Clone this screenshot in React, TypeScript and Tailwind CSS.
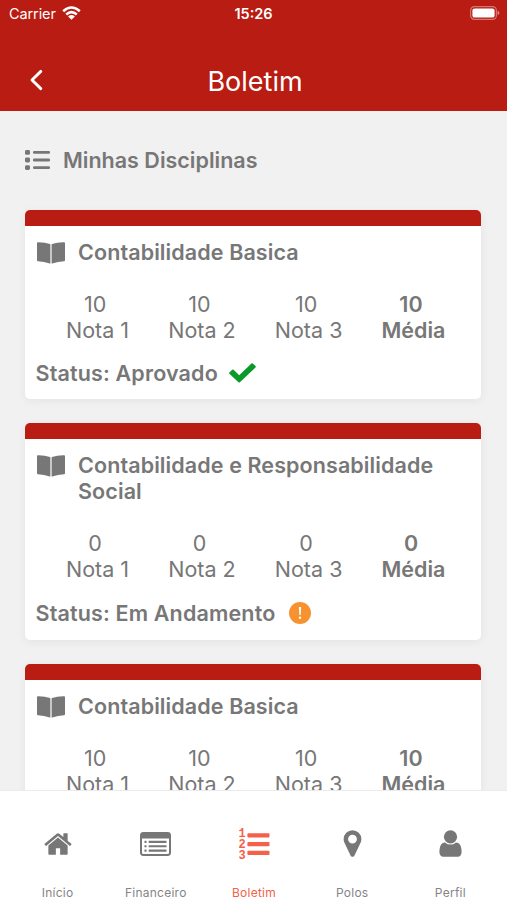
import clsx from 'clsx';
import type { ReactNode } from 'react';

type Status = 'Aprovado' | 'Em Andamento';

interface Subject {
    id: number;
    name: string;
    grades: number[];
    average: number;
    status: Status;
}

const subjects: Subject[] = [
    { id: 1, name: 'Contabilidade Basica', grades: [10, 10, 10], average: 10, status: 'Aprovado' },
    { id: 2, name: 'Contabilidade e Responsabilidade Social', grades: [0, 0, 0], average: 0, status: 'Em Andamento' },
    { id: 3, name: 'Contabilidade Basica', grades: [10, 10, 10], average: 10, status: 'Aprovado' },
];

const WifiIcon = () => (
    <svg viewBox="0 0 19 14" className="w-[19px] h-[14px] -mt-0.5" fill="none" stroke="currentColor" strokeWidth="2.6">
        <path d="M1.2 5.2Q9.5 -2.2 17.8 5.2" />
        <path d="M4.2 8.4Q9.5 3.8 14.8 8.4" />
        <path d="M9.5 13.8L6.1 10.5Q9.5 7.7 12.9 10.5Z" fill="currentColor" stroke="none" />
    </svg>
);

const BatteryIcon = () => (
    <svg viewBox="0 0 30 14" className="w-[30px] h-[14px] -mt-0.5">
        <rect x="0.6" y="0.6" width="25.8" height="12.8" rx="3.8" fill="none" stroke="#fff" strokeOpacity="0.4" strokeWidth="1.2" />
        <rect x="2.4" y="2.4" width="22.2" height="9.2" rx="2.2" fill="#fff" />
        <path d="M27.6 4.8Q29.4 5.4 29.4 7T27.6 9.2Z" fill="#fff" fillOpacity="0.5" />
    </svg>
);

const ListIcon = () => (
    <svg viewBox="0 0 25 20" className="w-[25px] h-5" fill="currentColor">
        <rect x="0" y="0" width="5" height="4.8" rx="1.4" />
        <rect x="0" y="7.6" width="5" height="4.8" rx="1.4" />
        <rect x="0" y="15.2" width="5" height="4.8" rx="1.4" />
        <rect x="8" y="1" width="17" height="2.8" rx="1.2" />
        <rect x="8" y="8.6" width="17" height="2.8" rx="1.2" />
        <rect x="8" y="16.2" width="17" height="2.8" rx="1.2" />
    </svg>
);

const BookIcon = () => (
    <svg viewBox="0 0 28 22" className="w-7 h-[22px]" fill="currentColor">
        <path d="M0 1.2Q0 .2 1 .3Q8 .2 13 2.1Q13.4 2.3 13.4 2.9V21.2Q13.4 21.7 12.8 21.5Q7 19.4 1 19.2Q0 19.1 0 18.2Z" />
        <path d="M28 1.2Q28 .2 27 .3Q20 .2 15 2.1Q14.6 2.3 14.6 2.9V21.2Q14.6 21.7 15.2 21.5Q21 19.4 27 19.2Q28 19.1 28 18.2Z" />
    </svg>
);

const CheckIcon = () => (
    <svg viewBox="0 0 27 20" className="w-[27px] h-5" fill="#0a9a2a">
        <path d="M.4 9.4L3.2 6.8Q3.9 6.2 4.6 6.8L10.2 12.2L22.4 .5Q23.1 -.1 23.8 .5L26.5 3Q27.2 3.7 26.5 4.4L10.9 19.2Q10.2 19.8 9.5 19.2L.4 10.7Q-.2 10 .4 9.4Z" />
    </svg>
);

const AlertIcon = () => (
    <svg viewBox="0 0 22 22" className="w-[22px] h-[22px]">
        <circle cx="11" cy="11" r="11" fill="#f6922f" />
        <path d="M9.9 5H12.1L11.7 13H10.3Z" fill="#fff" />
        <circle cx="11" cy="15.7" r="1.2" fill="#fff" />
    </svg>
);

const HomeIcon = () => (
    <svg viewBox="0 0 1792 1792" className="w-[30px] h-[30px]" fill="currentColor">
        <path d="M1472 992v480q0 26-19 45t-45 19h-384v-384h-256v384h-384q-26 0-45-19t-19-45v-480q0-1 .5-3t.5-3l575-474 575 474q1 2 1 6zm223-69l-62 74q-8 9-21 11h-3q-13 0-21-7l-692-577-692 577q-12 8-24 7-13-2-21-11l-62-74q-8-10-7-23.5t11-21.5l719-599q32-26 76-26t76 26l244 204v-195q0-14 9-23t23-9h192q14 0 23 9t9 23v408l219 182q10 8 11 21.5t-7 23.5z" />
    </svg>
);

const BillIcon = () => (
    <svg viewBox="0 0 31 24" className="w-[31px] h-6" fill="currentColor">
        <path fillRule="evenodd" d="M3.4 0H27.6Q31 0 31 3.4V20.6Q31 24 27.6 24H3.4Q0 24 0 20.6V3.4Q0 0 3.4 0ZM2 6.4V20.8Q2 22 3.2 22H27.8Q29 22 29 20.8V6.4Z" />
        <rect x="4.4" y="8.8" width="2.2" height="2.1" rx=".6" />
        <rect x="4.4" y="13.2" width="2.2" height="2.1" rx=".6" />
        <rect x="4.4" y="17.6" width="2.2" height="2.1" rx=".6" />
        <rect x="8.6" y="8.8" width="18" height="2.1" rx=".6" />
        <rect x="8.6" y="13.2" width="18" height="2.1" rx=".6" />
        <rect x="8.6" y="17.6" width="18" height="2.1" rx=".6" />
    </svg>
);

const NumberedListIcon = () => (
    <svg viewBox="0 0 32 32" className="w-8 h-8 overflow-visible" fill="currentColor">
        <g fontFamily="Liberation Mono, monospace" fontWeight="700" fontSize="12">
            <text x="0.6" y="9.2">1</text>
            <text x="0.6" y="20.2">2</text>
            <text x="0.6" y="31.2">3</text>
        </g>
        <rect x="9.4" y="5.2" width="22.1" height="4.2" rx=".8" />
        <rect x="9.4" y="14" width="22.1" height="4.2" rx=".8" />
        <rect x="9.4" y="22.8" width="22.1" height="4.2" rx=".8" />
    </svg>
);

const PinIcon = () => (
    <svg viewBox="0 0 1792 1792" className="w-[31px] h-[31px]" fill="currentColor">
        <path d="M1152 640q0-106-75-181t-181-75-181 75-75 181 75 181 181 75 181-75 75-181zm256 0q0 109-33 179l-364 774q-16 33-47.5 52t-67.5 19-67.5-19-46.5-52l-365-774q-33-70-33-179 0-212 150-362t362-150 362 150 150 362z" />
    </svg>
);

const UserIcon = () => (
    <svg viewBox="0 0 1792 1792" className="w-[31px] h-[31px]" fill="currentColor">
        <path d="M1536 1399q0 109-62.5 187t-150.5 78h-854q-88 0-150.5-78t-62.5-187q0-85 8.5-160.5t31.5-152 58.5-131 94-89 134.5-34.5q131 128 313 128t313-128q76 0 134.5 34.5t94 89 58.5 131 31.5 152 8.5 160.5zm-256-887q0 159-112.5 271.5t-271.5 112.5-271.5-112.5-112.5-271.5 112.5-271.5 271.5-112.5 271.5 112.5 112.5 271.5z" />
    </svg>
);

const tabs: { label: string; icon: ReactNode; active?: boolean }[] = [
    { label: 'Início', icon: <HomeIcon /> },
    { label: 'Financeiro', icon: <BillIcon /> },
    { label: 'Boletim', icon: <NumberedListIcon />, active: true },
    { label: 'Polos', icon: <PinIcon /> },
    { label: 'Perfil', icon: <UserIcon /> },
];

const Grade = ({ value, label, bold }: { value: number; label: string; bold?: boolean }) => (
    <div className={clsx('flex flex-col items-center whitespace-nowrap', bold ? 'font-semibold' : 'font-[370]')}>
        <span className="pr-[5px]">{value}</span>
        <span>{label}</span>
    </div>
);

const SubjectCard = ({ subject }: { subject: Subject }) => (
    <article className="shrink-0 rounded-[5px] bg-white overflow-hidden shadow-[0_2px_10px_rgba(0,0,0,0.06)] text-[21.5px] leading-[26px]">
        <div className="h-4 bg-[#b81c13]" />
        <div className="pt-[13px] pl-3 pr-8 flex gap-[13px] font-semibold">
            <div className="shrink-0 pt-[3px]"><BookIcon /></div>
            <h2 className="tracking-[0.1px]">{subject.name}</h2>
        </div>
        <div className="mt-[25.4px] ml-[41px] mr-[35.5px] flex justify-between">
            {subject.grades.map((grade, i) => (
                <Grade key={i} value={grade} label={`Nota ${i + 1}`} />
            ))}
            <Grade value={subject.average} label="Média" bold />
        </div>
        <div className="mt-[17.3px] pb-[12.8px] pl-[10.5px] flex items-center font-semibold">
            <span className="tracking-[0.15px]">Status: {subject.status}</span>
            {subject.status === 'Aprovado' ? (
                <div className="pl-[11px]"><CheckIcon /></div>
            ) : (
                <div className="h-7 pl-[13.5px] flex items-center"><AlertIcon /></div>
            )}
        </div>
    </article>
);

const App = () => {
    return (
        <div className="h-[900px] w-full flex flex-col overflow-hidden bg-[#f1f1f1] text-[#777777] font-['Inter',sans-serif]">
            <header className="h-[110.5px] shrink-0 bg-[#b81c13] text-white">
                <div className="h-7 px-[9px] grid grid-cols-3 items-center text-[14.5px]">
                    <div className="flex items-center gap-1.5 tracking-[-0.1px]">
                        <span>Carrier</span>
                        <WifiIcon />
                    </div>
                    <span className="text-center font-semibold">15:26</span>
                    <div className="flex justify-end -mr-0.5"><BatteryIcon /></div>
                </div>
                <div className="h-[82px] px-[29px] pt-[22px] grid grid-cols-[1fr_auto_1fr] items-start">
                    <button className="w-4 h-[60px] flex items-center" aria-label="Voltar">
                        <svg viewBox="0 0 16 22" className="w-4 h-[22px]" fill="none" stroke="currentColor" strokeWidth="2.9" strokeLinecap="round" strokeLinejoin="round">
                            <path d="M11.8 2.4L3 11L11.8 19.6" />
                        </svg>
                    </button>
                    <h1 className="pt-[15px] pl-[3px] text-[27px] leading-[34px]">Boletim</h1>
                </div>
            </header>

            <main className="flex-1 min-h-0 overflow-hidden pl-[25px] pr-[26px]">
                <div className="h-[99.9px] flex items-center gap-[13px]">
                    <div className="pb-px"><ListIcon /></div>
                    <h2 className="text-[21.5px] font-semibold">Minhas Disciplinas</h2>
                </div>
                <div className="flex flex-col gap-[24.5px]">
                    {subjects.map((subject) => (
                        <SubjectCard key={subject.id} subject={subject} />
                    ))}
                </div>
            </main>

            <nav className="h-[110px] shrink-0 bg-white border-t border-[#ebebeb] pl-[8.5px] pr-[7.5px] grid grid-cols-5">
                {tabs.map((tab) => (
                    <div key={tab.label} className={clsx('pt-[36.6px] flex flex-col items-center', tab.active && 'text-[#f4614b]')}>
                        <div className="h-8 flex items-center">{tab.icon}</div>
                        <span className={clsx('mt-[25px] text-[12px] leading-4 tracking-[0.25px]', !tab.active && 'text-[#858585]')}>{tab.label}</span>
                    </div>
                ))}
            </nav>
        </div>
    );
};

export default App;
